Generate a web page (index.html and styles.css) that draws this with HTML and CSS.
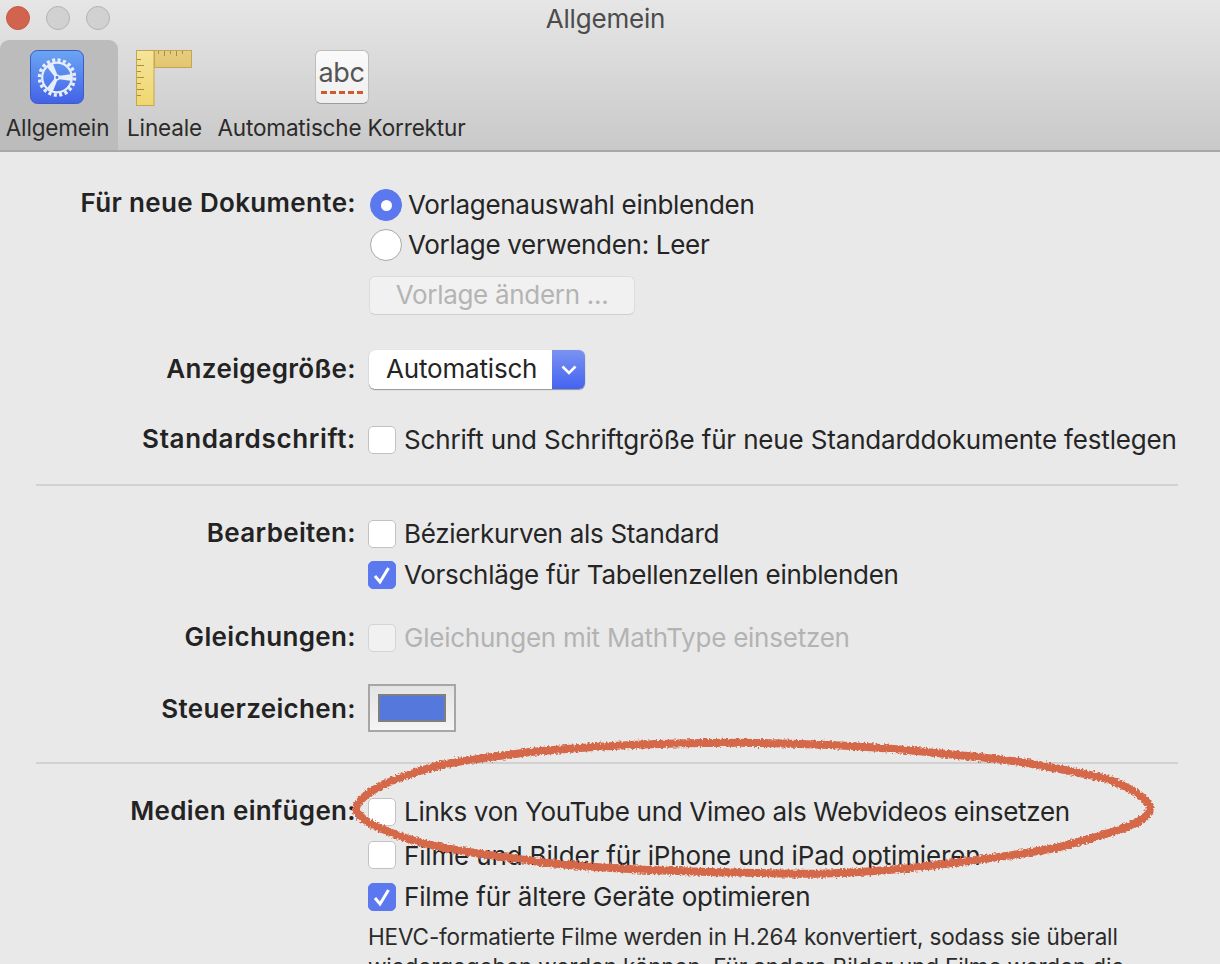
FILE: index.html
```html
<!DOCTYPE html>
<html lang="de">
<head>
<meta charset="utf-8">
<title>Allgemein</title>
<link rel="stylesheet" href="styles.css">
</head>
<body>
<div class="window">
  <header class="chrome">
    <div class="titlebar">
      <div class="lights">
        <span class="light light-close"></span>
        <span class="light"></span>
        <span class="light"></span>
      </div>
      <div class="title">Allgemein</div>
      <div></div>
    </div>
    <nav class="toolbar">
      <div class="tab tab-general selected">
        <svg class="icon" width="54" height="54" viewBox="0 0 54 54">
          <defs>
            <linearGradient id="blue" x1="0" y1="0" x2="0" y2="1">
              <stop offset="0" stop-color="#6ba6f3"/>
              <stop offset="1" stop-color="#4361e6"/>
            </linearGradient>
          </defs>
          <rect x="0.5" y="0.5" width="53" height="53" rx="7" fill="url(#blue)" stroke="#3b5cc4"/>
          <circle cx="27" cy="27.5" r="17.500" fill="none" stroke="#e6edfb" stroke-width="3.500" stroke-dasharray="3.1 2.4"/>
          <circle cx="27" cy="27.5" r="14.8" fill="none" stroke="#e6edfb" stroke-width="2.2"/>
          <g fill="#e6edfb">
            <path d="M26 26.300 L42 24 L42 31 L26 28.700 Z"/>
            <path d="M26 26.300 L42 24 L42 31 L26 28.700 Z" transform="rotate(120 27 27.5)"/>
            <path d="M26 26.300 L42 24 L42 31 L26 28.700 Z" transform="rotate(240 27 27.5)"/>
            <circle cx="27" cy="27.5" r="3"/>
          </g>
          <circle cx="27" cy="27.5" r="1.4" fill="#5079e8"/>
        </svg>
        <span class="tab-label">Allgemein</span>
      </div>
      <div class="tab tab-rulers">
        <svg class="icon" width="56" height="56" viewBox="0 0 56 56">
          <defs>
            <linearGradient id="ry" x1="0" y1="0" x2="0" y2="1">
              <stop offset="0" stop-color="#f5e49a"/>
              <stop offset="1" stop-color="#efd76f"/>
            </linearGradient>
            <linearGradient id="rx" x1="0" y1="0" x2="0" y2="1">
              <stop offset="0" stop-color="#e7cd80"/>
              <stop offset="1" stop-color="#e2c56f"/>
            </linearGradient>
          </defs>
          <rect x="18.5" y="0.5" width="37" height="17" fill="url(#rx)" stroke="#c3a653"/>
          <path d="M22.500 1v3M28.500 1v5M34.500 1v3M40.500 1v5M46.500 1v3" stroke="#a98f45" stroke-width="1" fill="none"/>
          <rect x="0.5" y="0.5" width="17.500" height="55" fill="url(#ry)" stroke="#c3a653"/>
          <path d="M1 9.500h4M1 15.500h7M1 21.500h4M1 27.500h7M1 33.500h4M1 39.500h7M1 45.500h4" stroke="#a98f45" stroke-width="1" fill="none"/>
        </svg>
        <span class="tab-label">Lineale</span>
      </div>
      <div class="tab tab-correct">
        <div class="icon abc">
          <span class="abc-text">abc</span>
          <span class="abc-line"></span>
        </div>
        <span class="tab-label">Automatische Korrektur</span>
      </div>
    </nav>
  </header>

  <main class="prefs">
    <div class="row row-1">
      <div class="label">Für neue Dokumente:</div>
      <div class="control"><span class="radio on"></span><span class="text">Vorlagenauswahl einblenden</span></div>
    </div>
    <div class="row">
      <div class="label"></div>
      <div class="control"><span class="radio"></span><span class="text">Vorlage verwenden: Leer</span></div>
    </div>
    <div class="row row-button">
      <div class="label"></div>
      <div class="button">Vorlage ändern ...</div>
    </div>
    <div class="row row-select">
      <div class="label">Anzeigegröße:</div>
      <div class="select">
        <span class="select-value">Automatisch</span>
        <span class="select-arrow">
          <svg width="16" height="10" viewBox="0 0 16 10"><path d="M1.500 1.500 L8 8 L14.500 1.500" fill="none" stroke="#fff" stroke-width="2.600"/></svg>
        </span>
      </div>
    </div>
    <div class="row row-font">
      <div class="label">Standardschrift:</div>
      <div class="control"><span class="check"></span><span class="text text-wide">Schrift und Schriftgröße für neue Standarddokumente festlegen</span></div>
    </div>
    <hr class="rule rule-1">
    <div class="row row-edit">
      <div class="label">Bearbeiten:</div>
      <div class="control"><span class="check"></span><span class="text">Bézierkurven als Standard</span></div>
    </div>
    <div class="row row-tight">
      <div class="label"></div>
      <div class="control">
        <span class="check on"><svg width="28" height="28" viewBox="0 0 28 28"><path d="M7 15 L12 21 L20.500 7" fill="none" stroke="#fff" stroke-width="3"/></svg></span>
        <span class="text">Vorschläge für Tabellenzellen einblenden</span>
      </div>
    </div>
    <div class="row row-math">
      <div class="label">Gleichungen:</div>
      <div class="control"><span class="check off"></span><span class="text text-off">Gleichungen mit MathType einsetzen</span></div>
    </div>
    <div class="row row-swatch">
      <div class="label">Steuerzeichen:</div>
      <div class="swatch"><span class="swatch-fill"></span></div>
    </div>
    <hr class="rule rule-2">
    <div class="row row-media">
      <div class="label">Medien einfügen:</div>
      <div class="control"><span class="check"></span><span class="text">Links von YouTube und Vimeo als Webvideos einsetzen</span></div>
    </div>
    <div class="row row-media-2">
      <div class="label"></div>
      <div class="control"><span class="check"></span><span class="text text-wide">Filme und Bilder für iPhone und iPad optimieren</span></div>
    </div>
    <div class="row row-media-3">
      <div class="label"></div>
      <div class="control">
        <span class="check on"><svg width="28" height="28" viewBox="0 0 28 28"><path d="M7 15 L12 21 L20.500 7" fill="none" stroke="#fff" stroke-width="3"/></svg></span>
        <span class="text text-wide">Filme für ältere Geräte optimieren</span>
      </div>
    </div>
    <p class="note">HEVC-formatierte Filme werden in H.264 konvertiert, sodass sie überall wiedergegeben werden können. Für andere Bilder und Filme werden die</p>
  </main>

  <svg class="scribble" width="1220" height="964" viewBox="0 0 1220 964">
    <defs>
      <filter id="rough" x="-5%" y="-20%" width="110%" height="140%">
        <feTurbulence type="fractalNoise" baseFrequency="0.5" numOctaves="2" seed="4"/>
        <feDisplacementMap in="SourceGraphic" scale="6" xChannelSelector="R" yChannelSelector="G"/>
      </filter>
    </defs>
    <path filter="url(#rough)" d="M356 808 C 362 790 400 776 440 765 C 470 759 505 755 540 751 C 610 745 680 742 760 743 C 820 744 880 747 927 752 C 965 756 995 758 1027 763 C 1060 769 1090 774 1110 780 C 1130 788 1148 798 1150 808 C 1150 815 1140 822 1127 827 C 1105 835 1085 840 1060 847 C 1030 853 1000 857 960 862 C 925 867 895 870 860 872 C 830 874 790 874 760 873 C 690 872 610 870 540 862 C 505 857 475 854 440 847 C 410 841 390 833 373 825 C 362 819 356 813 356 808 Z" fill="none" stroke="#d4674a" stroke-width="8"/>
  </svg>
</div>
</body>
</html>
```
FILE: styles.css
```css
* { box-sizing: border-box; }
html, body { margin: 0; padding: 0; }
body {
  width: 1220px;
  height: 964px;
  overflow: hidden;
  background: #e9e9e9;
  font-family: Inter, "Noto Sans", sans-serif;
  font-size: 26px;
  letter-spacing: -0.3px;
  color: #252525;
}
.window { position: relative; width: 1220px; height: 964px; overflow: hidden; }

.chrome {
  height: 152px;
  background: linear-gradient(#e6e6e6, #c9c9c9);
  border-bottom: 2px solid #a8a8a8;
}
.titlebar {
  height: 40px;
  display: grid;
  grid-template-columns: 1fr auto 1fr;
  align-items: center;
}
.lights { display: flex; gap: 16px; padding-left: 6px; margin-top: -4px; }
.light {
  width: 24px; height: 24px; border-radius: 50%;
  background: #d1d1d1; border: 1px solid #b4b4b4;
}
.light-close { background: #d2644f; border-color: #c65a46; }
.title { color: #4c4c4c; margin-top: -4px; margin-right: 9px; letter-spacing: -0.18px; }

.toolbar { display: flex; height: 110px; }
.tab {
  display: flex; flex-direction: column; align-items: center;
  padding-top: 10px; height: 110px;
}
.tab-general { width: 118px; padding-right: 3px; }
.tab-general .icon { margin-right: 2px; }
.tab-rulers { width: 93px; }
.tab-rulers .icon { margin-right: 2px; }
.tab-correct { width: 261px; }
.selected { background: #bcbcbc; border-radius: 9px 9px 0 0; }
.icon { display: block; flex: none; }
.tab-label { margin-top: 8px; line-height: 32px; font-size: 22.500px; letter-spacing: -0.15px; color: #2b2b2b; white-space: nowrap; }
.tab-rulers .tab-label { margin-top: 6px; }

.abc {
  position: relative;
  width: 54px; height: 54px;
  background: linear-gradient(#fafafa, #efefef);
  border: 1px solid #bdbdbd;
  border-bottom-color: #9d9d9d;
  border-radius: 6px;
  display: flex; flex-direction: column; align-items: center;
}
.abc-text { font-size: 27px; line-height: 32px; margin-top: 6px; color: #555; letter-spacing: -0.3px; }
.abc-line { width: 42px; margin-top: 2px; border-top: 3px dashed #cf5a2b; }

.row { display: flex; align-items: center; height: 40px; column-gap: 12px; }
.label {
  width: 356px; text-align: right;
  font-weight: 600; letter-spacing: 0.35px; color: #232323;
  flex: none; margin-top: -3px;
}
.control { display: flex; align-items: center; }
.text { white-space: nowrap; margin-bottom: 2px; }
.text-wide { letter-spacing: -0.16px; }
.text-off { color: #b3b3b3; letter-spacing: -0.24px; }

.row-1 { margin-top: 33px; }
.row-1 .label { margin-top: -5px; }
.row-button { margin-top: 11px; height: 39px; }
.row-select { margin-top: 35px; height: 39px; }
.row-select .label { margin-top: -2px; }
.row-font { margin-top: 31px; }
.row-font .label { letter-spacing: 0.65px; }
.rule { height: 2px; border: 0; background: #d1d1d1; width: 1142px; margin: 0 36px; }
.rule-1 { margin-top: 24px; }
.rule-2 { margin-top: 30px; }
.row-edit { margin-top: 28px; }
.row-tight { margin-top: 1px; }
.row-math { margin-top: 23px; }
.row-swatch { margin-top: 26px; height: 48px; }
.row-swatch .label { margin-top: 1px; }
.row-media { margin-top: 28px; }
.row-media-2 { margin-top: 3px; }
.row-media-2 .text { margin-bottom: 0; }
.row-media-3 { margin-top: 2px; }

.radio {
  width: 32px; height: 32px; border-radius: 50%; flex: none;
  background: #fff; border: 1px solid #a9a9a9;
  margin: 0 6px 0 2px;
  display: flex; align-items: center; justify-content: center;
}
.radio.on { background: #5b78ef; border-color: #5b78ef; }
.radio.on::after { content: ""; width: 11px; height: 11px; border-radius: 50%; background: #fff; }

.check {
  width: 28px; height: 28px; border-radius: 5px; flex: none;
  background: #fff; border: 1px solid #c2c2c2;
  margin-right: 8px; display: block;
}
.check.on { background: #5b78ef; border-color: #5b78ef; }
.check.on svg { display: block; margin: -1px; }
.check.off { background: #f1f1f1; border-color: #d4d4d4; }

.button {
  width: 266px; height: 39px; margin-left: 1px;
  background: #f1f1f1; border: 1px solid #dcdcdc; border-bottom-color: #cfcfcf;
  border-radius: 6px;
  color: #b4b4b4; text-align: center; line-height: 35px;
}
.select {
  width: 216px; height: 39px; display: flex; margin-left: 1px;
  background: #fff; border-radius: 6px;
  box-shadow: 0 1px 1px rgba(0,0,0,.35), 0 0 1px rgba(0,0,0,.2);
  overflow: hidden;
}
.select-value { width: 183px; padding-left: 17px; line-height: 38px; letter-spacing: -0.18px; }
.select-arrow {
  width: 33px; display: flex; align-items: center; justify-content: center;
  background: linear-gradient(#7a93f1, #4463f0);
}
.swatch {
  width: 88px; height: 48px;
  border: 2px solid #a6a6a6;
  background: linear-gradient(#e4e4e4, #f5f5f5);
  padding: 8px;
}
.swatch-fill { display: block; width: 68px; height: 28px; background: #5578dd; border: 2px solid #7f7f7f; }

.note {
  margin: 0 40px 0 368px; padding-top: 5px;
  font-size: 22.500px; line-height: 30px; letter-spacing: -0.14px; color: #2b2b2b;
}
.scribble { position: absolute; left: 0; top: 0; pointer-events: none; }
```
